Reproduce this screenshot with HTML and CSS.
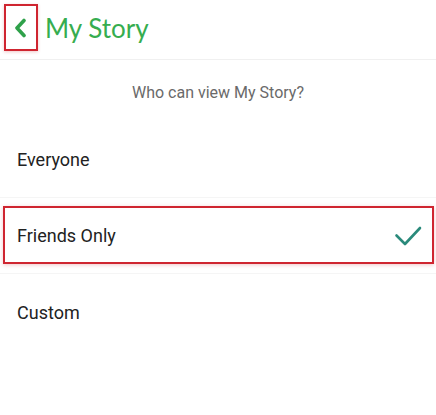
FILE: index.html
```html
<!DOCTYPE html>
<html>
<head>
<meta charset="utf-8">
<link rel="stylesheet" href="styles.css">
</head>
<body>
<div class="screen">
  <header class="header">
    <button class="back" aria-label="Back">
      <svg width="14" height="20" viewBox="0 0 14 20"><path d="M11 2.5 L4 10 L11 17.5" fill="none" stroke="#2fa14a" stroke-width="3.6" stroke-linecap="round" stroke-linejoin="round"/></svg>
    </button>
    <h1 class="title">My Story</h1>
  </header>
  <p class="question">Who can view My Story?</p>
  <ul class="options">
    <li class="option">Everyone</li>
    <li class="option selected">Friends Only
      <svg class="check" width="28" height="20" viewBox="0 0 28 20"><path d="M2.5 9.5 L11 18 L26 2" fill="none" stroke="#2a8a7b" stroke-width="2.6" stroke-linecap="round" stroke-linejoin="round"/></svg>
    </li>
    <li class="option">Custom</li>
  </ul>
</div>
</body>
</html>
```
FILE: styles.css
```css
html, body {
  margin: 0;
  padding: 0;
  background: #ffffff;
}
.screen {
  width: 436px;
  height: 415px;
  overflow: hidden;
  font-family: Roboto, "Liberation Sans", sans-serif;
}
.header {
  height: 60px;
  display: flex;
  align-items: flex-start;
  border-bottom: 1px solid #f0f0f0;
  box-sizing: border-box;
}
.back {
  margin: 4px 0 0 4px;
  width: 34px;
  height: 47px;
  border: 2px solid #cf2530;
  background: transparent;
  padding: 0;
  display: flex;
  align-items: center;
  justify-content: center;
  box-shadow: 0 1px 3px rgba(200, 30, 40, 0.25);
  cursor: pointer;
}
.back svg {
  margin-top: 1px;
  margin-left: -2px;
}
.title {
  margin: 12px 0 0 7px;
  font-family: Lato, "Open Sans", sans-serif;
  font-weight: 400;
  font-size: 26px;
  line-height: 32px;
  color: #36ad4f;
}
.question {
  margin: 23px 0 0 0;
  text-align: center;
  font-size: 16px;
  line-height: 20px;
  color: #6a6a6a;
}
.options {
  list-style: none;
  margin: 19px 0 0 0;
  padding: 0;
}
.option {
  position: relative;
  height: 76px;
  display: flex;
  align-items: center;
  justify-content: space-between;
  padding: 0 17px;
  font-size: 18px;
  color: #222222;
  border-bottom: 1px solid #f5f5f5;
  box-sizing: border-box;
}
.option:last-child {
  border-bottom: none;
}
.selected::after {
  content: "";
  position: absolute;
  left: 3px;
  right: 2px;
  top: 8px;
  bottom: 9px;
  border: 2px solid #cf2530;
  box-shadow: 0 1px 4px rgba(200, 30, 40, 0.25);
  pointer-events: none;
}
.check {
  margin-right: -3px;
}
```
